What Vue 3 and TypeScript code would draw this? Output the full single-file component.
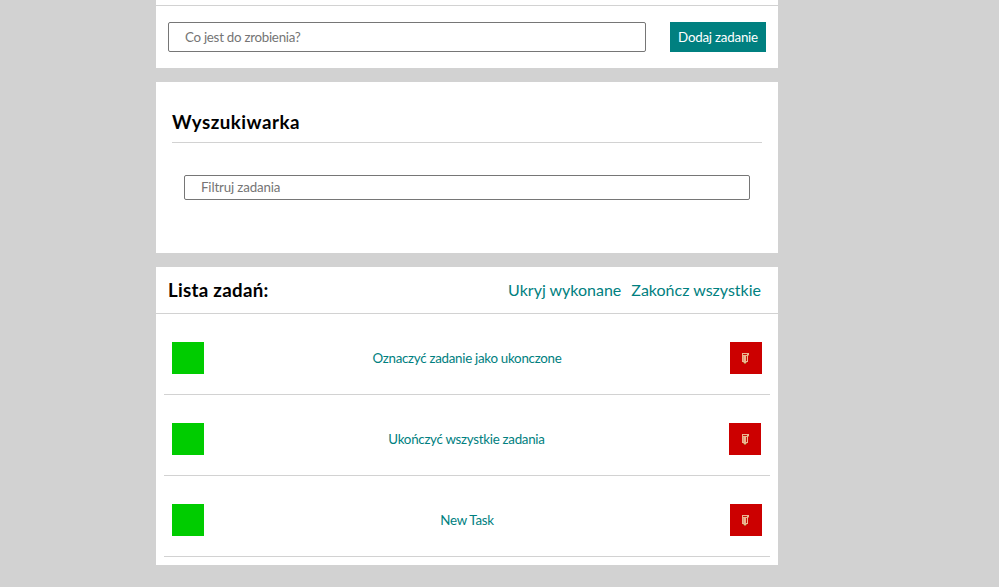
<script setup lang="ts">
import { ref } from 'vue'

interface Task {
  id: number
  content: string
}

const newTask = ref<string>('')
const filter = ref<string>('')
const tasks = ref<Task[]>([
  { id: 1, content: 'Oznaczyć zadanie jako ukonczone' },
  { id: 2, content: 'Ukończyć wszystkie zadania' },
  { id: 3, content: 'New Task' },
])

function addTask(): void {
  const content = newTask.value.trim()
  if (!content) return
  tasks.value.push({ id: Date.now(), content })
  newTask.value = ''
}

function removeTask(id: number): void {
  tasks.value = tasks.value.filter((task) => task.id !== id)
}
</script>

<template>
  <main class="container">
    <section class="card card-form">
      <form class="form" @submit.prevent="addTask">
        <input v-model="newTask" class="input input-task" placeholder="Co jest do zrobienia?" />
        <button class="submit">Dodaj zadanie</button>
      </form>
    </section>

    <section class="card card-search">
      <h3 class="search-title">Wyszukiwarka</h3>
      <div class="search-body">
        <input v-model="filter" class="input input-filter" placeholder="Filtruj zadania" />
      </div>
    </section>

    <section class="card card-list">
      <header class="list-header">
        <h3 class="list-title">Lista zadań:</h3>
        <div class="actions">
          <button class="action">Ukryj wykonane</button>
          <button class="action">Zakończ wszystkie</button>
        </div>
      </header>
      <ul class="tasks">
        <li v-for="task in tasks" :key="task.id" class="task">
          <button class="square done" aria-label="Ukończ"></button>
          <a class="task-link">{{ task.content }}</a>
          <button class="square remove" aria-label="Usuń" @click="removeTask(task.id)">
            <svg class="bin" viewBox="0 0 7 11" width="7" height="11" shape-rendering="crispEdges">
              <path d="M0 0H7V3H6V9H5V10H1V9H0Z" fill="#ecb491" />
              <path d="M1 1H5V2H1Z M4 3H5V8H4Z" fill="#cc1508" />
              <path d="M1 3H2V8H1Z" fill="#e39b78" />
              <path d="M6 2H7V3H6Z M1 9H2V10H1Z M4 9H5V10H4Z M2 10H4V11H2Z" fill="#b66b35" />
            </svg>
          </button>
        </li>
      </ul>
    </section>
  </main>
</template>

<style>
body {
  background: #d2d2d2;
}
</style>

<style scoped>
.container {
  width: 622px;
  height: 587px;
  margin-left: 156px;
  display: flex;
  flex-direction: column;
  gap: 14px;
  font-family: Lato, sans-serif;
  font-size: 16px;
  color: #000;
}

.container *,
.container {
  box-sizing: border-box;
}

.card {
  flex: none;
  background: #fff;
}

.card-form {
  height: 68px;
  padding-top: 5px;
}

.form {
  display: flex;
  gap: 24px;
  padding: 16px 12px;
  border-top: 1px solid #d2d2d2;
}

.input {
  margin: 0;
  padding: 0 16px;
  border: 1px solid #767676;
  border-radius: 2px;
  background: #fff;
  font-family: inherit;
  font-size: 13.3333px;
}

.input::placeholder {
  color: #757575;
}

.input-task {
  flex: 1;
  min-width: 0;
  height: 30px;
  letter-spacing: -0.27px;
}

.submit {
  width: 96px;
  height: 30px;
  padding: 0;
  border: none;
  background: #008080;
  color: #fff;
  font-family: inherit;
  font-size: 13.3333px;
  letter-spacing: -0.22px;
}

.card-search {
  height: 171px;
  padding: 16px;
}

.search-title {
  height: 45px;
  margin: 0;
  padding-top: 13px;
  border-bottom: 1px solid #d2d2d2;
  font-size: 18.72px;
  line-height: 22px;
  letter-spacing: 0.5px;
}

.search-body {
  display: flex;
  padding: 32px 12px;
}

.input-filter {
  width: 100%;
  height: 25px;
  padding-bottom: 2px;
  letter-spacing: -0.15px;
}

.card-list {
  height: 298px;
}

.list-header {
  display: flex;
  align-items: center;
  justify-content: space-between;
  height: 47px;
  padding: 0 17px 0 12px;
  border-bottom: 1px solid #d2d2d2;
}

.list-title {
  margin: 0;
  font-size: 18.72px;
  line-height: 22px;
  letter-spacing: 0.28px;
}

.actions {
  display: flex;
  gap: 10px;
  padding-bottom: 2px;
}

.action {
  padding: 0;
  border: none;
  background: none;
  color: #008080;
  font-family: inherit;
  font-size: 16px;
}

.tasks {
  margin: 0;
  padding: 0 8px;
  list-style: none;
}

.task {
  display: grid;
  grid-template-columns: 32px 1fr 32px;
  align-items: center;
  height: 81px;
  padding: 28px 8px 20px;
  border-bottom: 1px solid #d2d2d2;
}

.square {
  display: flex;
  align-items: center;
  justify-content: center;
  width: 32px;
  height: 32px;
  padding: 0;
  border: none;
}

.done {
  background: #00cc00;
}

.remove {
  justify-content: flex-start;
  padding-left: 12px;
  background: #cc0000;
}

.task:nth-child(2) {
  padding-right: 9px;
}

.task:nth-child(2) .remove {
  padding-left: 13px;
}

.task-link {
  color: #008080;
  font-size: 13.3333px;
  letter-spacing: -0.28px;
  text-align: center;
}
</style>
